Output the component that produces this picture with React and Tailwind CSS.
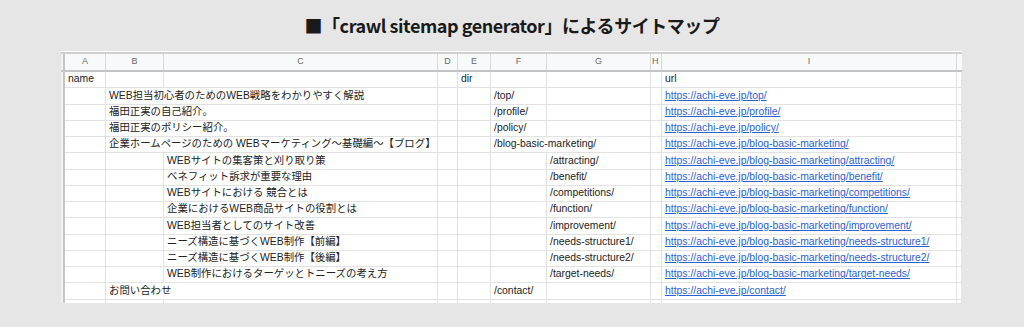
const cols = ['', 'A', 'B', 'C', 'D', 'E', 'F', 'G', 'H', 'I', ''];

const base = 'https://achi-eve.jp';

const rows = [
  [
    { col: 1, n: 1, span: '', text: 'name' },
    { col: 5, n: 1, span: '', text: 'dir' },
    { col: 9, n: 1, span: '', text: 'url' },
  ],
  [
    { col: 2, n: 2, span: 'col-span-2', text: 'WEB担当初心者のためのWEB戦略をわかりやすく解説' },
    { col: 6, n: 1, span: '', text: '/top/' },
    { col: 9, n: 1, span: '', text: `${base}/top/`, link: true },
  ],
  [
    { col: 2, n: 2, span: 'col-span-2', text: '福田正実の自己紹介。' },
    { col: 6, n: 1, span: '', text: '/profile/' },
    { col: 9, n: 1, span: '', text: `${base}/profile/`, link: true },
  ],
  [
    { col: 2, n: 2, span: 'col-span-2', text: '福田正実のポリシー紹介。' },
    { col: 6, n: 1, span: '', text: '/policy/' },
    { col: 9, n: 1, span: '', text: `${base}/policy/`, link: true },
  ],
  [
    { col: 2, n: 2, span: 'col-span-2', text: '企業ホームページのための WEBマーケティング〜基礎編〜【ブログ】' },
    { col: 6, n: 2, span: 'col-span-2', text: '/blog-basic-marketing/' },
    { col: 9, n: 1, span: '', text: `${base}/blog-basic-marketing/`, link: true },
  ],
  ...[
    ['WEBサイトの集客策と刈り取り策', 'attracting'],
    ['ベネフィット訴求が重要な理由', 'benefit'],
    ['WEBサイトにおける 競合とは', 'competitions'],
    ['企業におけるWEB商品サイトの役割とは', 'function'],
    ['WEB担当者としてのサイト改善', 'improvement'],
    ['ニーズ構造に基づくWEB制作【前編】', 'needs-structure1'],
    ['ニーズ構造に基づくWEB制作【後編】', 'needs-structure2'],
    ['WEB制作におけるターゲッとトニーズの考え方', 'target-needs'],
  ].map(([title, slug]) => [
    { col: 3, n: 1, span: '', text: title },
    { col: 7, n: 1, span: '', text: `/${slug}/` },
    { col: 9, n: 1, span: '', text: `${base}/blog-basic-marketing/${slug}/`, link: true },
  ]),
  [
    { col: 2, n: 2, span: 'col-span-2', text: 'お問い合わせ' },
    { col: 6, n: 1, span: '', text: '/contact/' },
    { col: 9, n: 1, span: '', text: `${base}/contact/`, link: true },
  ],
  [],
];

const grid =
  'grid grid-cols-[4px_41px_58px_274px_20px_33px_56px_104px_11px_295px_5px]';

function Row({ cells }) {
  const out = [
    <div key="s" className="bg-[#f1f1f1] border-r-2 border-[#c6c6c6]" />,
  ];
  let c = 1;
  while (c < 11) {
    const cell = cells.find((x) => x.col === c);
    if (cell) {
      out.push(
        <div
          key={c}
          className={`${cell.span} flex items-center pl-[3px] whitespace-nowrap border-r border-b border-[#e2e2e2]`}
        >
          {cell.link ? (
            <span className="text-[#2a62d2] underline underline-offset-1">{cell.text}</span>
          ) : (
            <span className="text-[#222]">{cell.text}</span>
          )}
        </div>
      );
      c += cell.n;
    } else {
      out.push(<div key={c} className="border-r border-b border-[#e2e2e2]" />);
      c++;
    }
  }
  return <div className={`${grid} h-[16.25px] text-[10.4px] leading-none`}>{out}</div>;
}

export default function App() {
  return (
    <div className="w-[1024px] h-[327px] bg-[#e6e6e6] overflow-hidden font-['Liberation_Sans','Noto_Sans_CJK_JP',sans-serif]">
      <div className="h-[51px] flex items-center justify-center">
        <h1 className="text-[18px] font-bold text-[#1a1a1a] font-['Noto_Sans_CJK_JP',sans-serif] tracking-tight">
          ■「crawl sitemap generator」によるサイトマップ
        </h1>
      </div>

      <div className="ml-[61px] w-[901px] h-[252px] bg-white pt-px overflow-hidden">
        {/* column header */}
        <div className={`${grid} h-[20px] border-t-2 border-b-2 border-t-[#cfcfcf] border-b-[#c4c4c4] bg-[#f8f9fa]`}>
          {cols.map((l, i) =>
            i === 0 ? (
              <div key={i} className="bg-[#f1f1f1] border-r-2 border-[#c6c6c6]" />
            ) : (
              <div
                key={i}
                className={`flex items-center ${l === 'H' ? 'justify-start pl-px' : 'justify-center'} text-[9px] text-[#6b6b6b] ${i < 10 ? 'border-r border-[#dadada]' : ''}`}
              >
                {l}
              </div>
            )
          )}
        </div>

        {rows.map((cells, i) => (
          <Row key={i} cells={cells} />
        ))}
      </div>
    </div>
  );
}
